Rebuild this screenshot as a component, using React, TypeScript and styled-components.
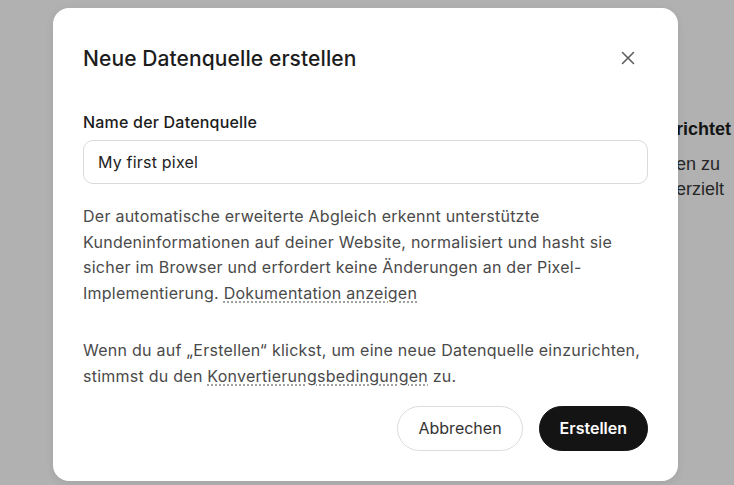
import styled, { createGlobalStyle } from "styled-components";

const GlobalStyle = createGlobalStyle`
  html, body {
    margin: 0;
    padding: 0;
    height: 100%;
    overflow: hidden;
  }
  body {
    font-family: Inter, Roboto, "Liberation Sans", Arial, sans-serif;
    background: #b1b1b1;
  }
  * {
    box-sizing: border-box;
  }
`;

const Page = styled.div`
  position: relative;
  width: 734px;
  height: 485px;
  display: flex;
  background: #b1b1b1;
  overflow: hidden;
`;

const BehindColumn = styled.div`
  margin-left: 676px;
  padding-top: 118px;
  font-family: "Liberation Sans", Arial, sans-serif;
  color: #141414;
  white-space: nowrap;
`;

const BehindTitle = styled.div`
  font-size: 18px;
  line-height: 23px;
  font-weight: bold;
  margin-bottom: 11px;
`;

const BehindText = styled.div`
  font-size: 18px;
  line-height: 25px;
  color: #262626;
`;

const Overlay = styled.div`
  position: absolute;
  inset: 0;
  padding: 8px 0 0 53px;
`;

const Modal = styled.div`
  width: 625px;
  background: #ffffff;
  border-radius: 16px;
  padding: 30px 30px 30px 30px;
  box-shadow: 0 2px 8px rgba(0, 0, 0, 0.08);
`;

const Header = styled.div`
  display: flex;
  align-items: center;
  justify-content: space-between;
  height: 40px;
  margin-bottom: 32px;
`;

const Title = styled.h2`
  margin: 0;
  font-size: 21px;
  font-weight: 500;
  letter-spacing: 0.1px;
  color: #1c1c1c;
`;

const CloseButton = styled.button`
  width: 40px;
  height: 40px;
  display: flex;
  align-items: center;
  justify-content: center;
  border: none;
  background: transparent;
  padding: 0;
  color: #5e5e5e;
  cursor: pointer;
`;

const Label = styled.label`
  display: block;
  font-size: 16px;
  line-height: 24px;
  font-weight: 500;
  letter-spacing: 0.2px;
  color: #1c1c1c;
  margin-bottom: 6px;
`;

const Input = styled.input`
  display: block;
  width: 100%;
  height: 44px;
  padding: 0 14px;
  border: 1px solid #dadada;
  border-radius: 10px;
  font-family: inherit;
  font-size: 16px;
  letter-spacing: 0.2px;
  color: #222;
  outline: none;
`;

const Paragraph = styled.p<{ $gap: number }>`
  margin: ${(p) => p.$gap}px 0 0;
  font-size: 16px;
  line-height: 1.6;
  letter-spacing: 0.25px;
  color: #4a4a4a;
`;

const DottedLink = styled.a`
  color: inherit;
  text-decoration: underline dotted #8a8a8a;
  text-underline-offset: 3px;
`;

const Footer = styled.div`
  display: flex;
  justify-content: flex-end;
  gap: 16px;
  margin-top: 16px;
`;

const PillButton = styled.button<{ $primary?: boolean }>`
  height: 45px;
  padding: 0 20px;
  border-radius: 23px;
  font-family: inherit;
  font-size: 16px;
  font-weight: ${(p) => (p.$primary ? 600 : 400)};
  color: ${(p) => (p.$primary ? "#ffffff" : "#333333")};
  background: ${(p) => (p.$primary ? "#141414" : "#ffffff")};
  border: 1px solid ${(p) => (p.$primary ? "#141414" : "#dcdcdc")};
  cursor: pointer;
`;

function CloseIcon() {
  return (
    <svg width="14" height="14" viewBox="0 0 14 14" fill="none">
      <path
        d="M1.5 1.5L12.5 12.5M12.5 1.5L1.5 12.5"
        stroke="currentColor"
        strokeWidth="1.6"
        strokeLinecap="round"
      />
    </svg>
  );
}

export default function App() {
  return (
    <>
      <GlobalStyle />
      <Page>
        <BehindColumn>
          <BehindTitle>richtet</BehindTitle>
          <BehindText>en zu</BehindText>
          <BehindText>erzielt</BehindText>
        </BehindColumn>
        <Overlay>
          <Modal>
            <Header>
              <Title>Neue Datenquelle erstellen</Title>
              <CloseButton aria-label="Schließen">
                <CloseIcon />
              </CloseButton>
            </Header>
            <Label htmlFor="source-name">Name der Datenquelle</Label>
            <Input id="source-name" defaultValue="My first pixel" />
            <Paragraph $gap={20}>
              Der automatische erweiterte Abgleich erkennt unterstützte
              Kundeninformationen auf deiner Website, normalisiert und hasht sie
              sicher im Browser und erfordert keine Änderungen an der
              Pixel-Implementierung.{" "}
              <DottedLink href="#">Dokumentation anzeigen</DottedLink>
            </Paragraph>
            <Paragraph $gap={32}>
              Wenn du auf „Erstellen“ klickst, um eine neue Datenquelle
              einzurichten, stimmst du den{" "}
              <DottedLink href="#">Konvertierungsbedingungen</DottedLink> zu.
            </Paragraph>
            <Footer>
              <PillButton>Abbrechen</PillButton>
              <PillButton $primary>Erstellen</PillButton>
            </Footer>
          </Modal>
        </Overlay>
      </Page>
    </>
  );
}
